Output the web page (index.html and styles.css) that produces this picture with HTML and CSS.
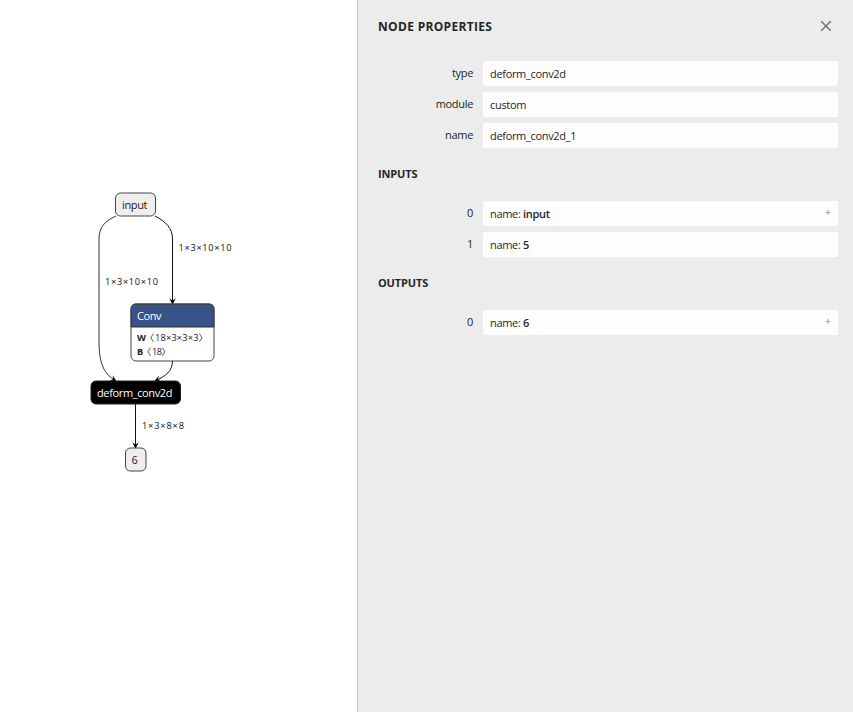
FILE: index.html
```html
<!DOCTYPE html>
<html lang="en">
<head>
<meta charset="utf-8">
<title>Node Properties</title>
<link rel="stylesheet" href="styles.css">
</head>
<body>
<main class="graph">
<svg width="357" height="712" viewBox="0 0 357 712">
  <defs>
    <marker id="arrow" viewBox="0 0 10 10" refX="9" refY="5" markerWidth="6.5" markerHeight="6.5" markerUnits="userSpaceOnUse" orient="auto"><path d="M0 0L10 5L0 10L4 5Z"/></marker>
  </defs>
  <g class="edges">
    <path d="M116 216C105 221 99 227 99 239V341C99 364 104 374 116 381"/>
    <path d="M155 216C166 222 172.500 228 172.500 239V304"/>
    <path d="M172.500 361C172.500 371 166 376 155 381"/>
    <path d="M135.500 404V448"/>
  </g>
  <g class="edge-labels">
    <text x="105" y="285" textLength="53">1×3×10×10</text>
    <text x="178.500" y="251" textLength="53">1×3×10×10</text>
    <text x="142" y="429" textLength="42">1×3×8×8</text>
  </g>
  <g class="node">
    <rect x="115.500" y="193" width="40" height="23" rx="5"/>
    <text x="122" y="209" textLength="25.500">input</text>
  </g>
  <g class="node conv">
    <path class="body" d="M131 327H214V356Q214 361 209 361H136Q131 361 131 356Z"/>
    <path class="head" d="M131 327V309Q131 304 136 304H209Q214 304 214 309V327Z"/>
    <rect class="outline" x="131" y="304" width="83" height="57" rx="5"/>
    <text class="light" x="137" y="320" textLength="24.500">Conv</text>
    <g class="params">
      <text x="137" y="341"><tspan class="bold">W</tspan><tspan x="145">〈</tspan><tspan x="155" textLength="43.500">18×3×3×3</tspan><tspan x="198.500">〉</tspan></text>
      <text x="137" y="355"><tspan class="bold">B</tspan><tspan x="142">〈</tspan><tspan x="152" textLength="10">18</tspan><tspan x="161.500">〉</tspan></text>
    </g>
  </g>
  <g class="node selected">
    <rect x="91" y="381" width="89.500" height="23" rx="5"/>
    <text class="light" x="97" y="397" textLength="75.500">deform_conv2d</text>
  </g>
  <g class="node">
    <rect x="125.500" y="448" width="20.500" height="23" rx="5"/>
    <text x="131.500" y="464">6</text>
  </g>
</svg>
</main>
<aside class="sidebar">
  <header><h1>NODE PROPERTIES</h1>
    <svg class="close" width="12" height="12" viewBox="0 0 12 12"><path d="M1.200 1.200L10.800 10.800M10.800 1.200L1.200 10.800"/></svg>
  </header>
  <div class="row"><label>type</label><div class="value">deform_conv2d</div></div>
  <div class="row"><label>module</label><div class="value">custom</div></div>
  <div class="row"><label>name</label><div class="value">deform_conv2d_1</div></div>
  <h2>INPUTS</h2>
  <div class="row"><label>0</label><div class="value"><span class="port">name: <b>input</b></span><span class="plus">+</span></div></div>
  <div class="row"><label>1</label><div class="value"><span class="port">name: <b>5</b></span></div></div>
  <h2>OUTPUTS</h2>
  <div class="row"><label>0</label><div class="value"><span class="port">name: <b>6</b></span><span class="plus">+</span></div></div>
</aside>
</body>
</html>
```
FILE: styles.css
```css
* { box-sizing: border-box; }
body {
  margin: 0;
  height: 712px;
  display: flex;
  overflow: hidden;
  background: #fff;
  color: #252525;
  font: 11px/14px "Open Sans", "Noto Sans CJK SC", sans-serif;
}
.graph { width: 357px; flex: none; }
.graph svg { display: block; }
.edges path { fill: none; stroke: #111; stroke-width: 1; marker-end: url(#arrow); }
.edges path:first-child { stroke: #333; }
.edge-labels text, .params text { font-size: 9.2px; fill: #111; }
.node rect { fill: #eee; stroke: #444; stroke-width: 1; }
.node text { font-size: 11px; fill: #222; }
.node .light { fill: #fff; }
.node.selected rect { fill: #000; stroke: #222; }
.conv .body { fill: #fff; }
.conv .head { fill: #375388; stroke: #333; }
.node.conv .outline { fill: none; }
.node.conv .params text { font-size: 9.2px; }
.bold, b { font-weight: 700; }
.sidebar { flex: 1; border-left: 1px solid #c2c2c2; background: #ececec; padding: 0 15px 0 20px; }
header { height: 61px; display: flex; justify-content: space-between; padding-top: 20px; }
h1, h2 { margin: 0; font-size: 11px; line-height: 14px; font-weight: 700; }
h1 { font-size: 12px; letter-spacing: 0.32px; }
.close { margin-right: 6px; fill: none; stroke: #777; stroke-width: 1.6; }
.row { display: flex; height: 25px; margin-bottom: 6px; letter-spacing: -0.32px; }
label { width: 95px; margin-right: 10px; padding-top: 5px; text-align: right; }
.value { flex: 1; display: flex; justify-content: space-between; padding: 6px 7px 0; border-radius: 2px; background: #fdfdfd; }
.port b { font-weight: 650; }
h2 { height: 47px; padding-top: 13px; letter-spacing: -0.15px; }
.plus { margin-top: -2px; color: #888; font-size: 11px; letter-spacing: 0; }
```
